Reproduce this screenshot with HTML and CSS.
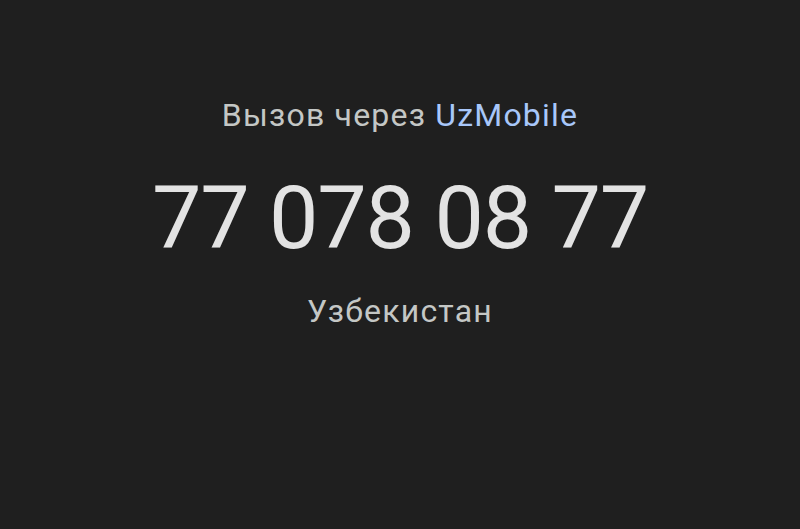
FILE: index.html
```html
<!DOCTYPE html>
<html lang="ru">
<head>
<meta charset="utf-8">
<link rel="stylesheet" href="styles.css">
</head>
<body>
<main class="screen">
  <div class="via">Вызов через <span class="carrier">UzMobile</span></div>
  <div class="number">77 078 08 77</div>
  <div class="country">Узбекистан</div>
</main>
</body>
</html>
```

FILE: styles.css
```css
html, body {
  margin: 0;
  padding: 0;
  background: #1f1f1f;
}
.screen {
  width: 800px;
  height: 529px;
  display: flex;
  flex-direction: column;
  align-items: center;
  font-family: Roboto, "Noto Sans", sans-serif;
  padding-top: 95px;
  box-sizing: border-box;
}
.via {
  font-size: 32px;
  line-height: 40px;
  letter-spacing: 1.2px;
  color: #c4c7c5;
}
.carrier {
  color: #a8c7fa;
}
.number {
  font-size: 88px;
  line-height: 100px;
  letter-spacing: -1.2px;
  color: #e3e3e3;
  margin-top: 33px;
}
.country {
  font-size: 32px;
  line-height: 40px;
  letter-spacing: 1.2px;
  color: #c4c7c5;
  margin-top: 23px;
}
```
